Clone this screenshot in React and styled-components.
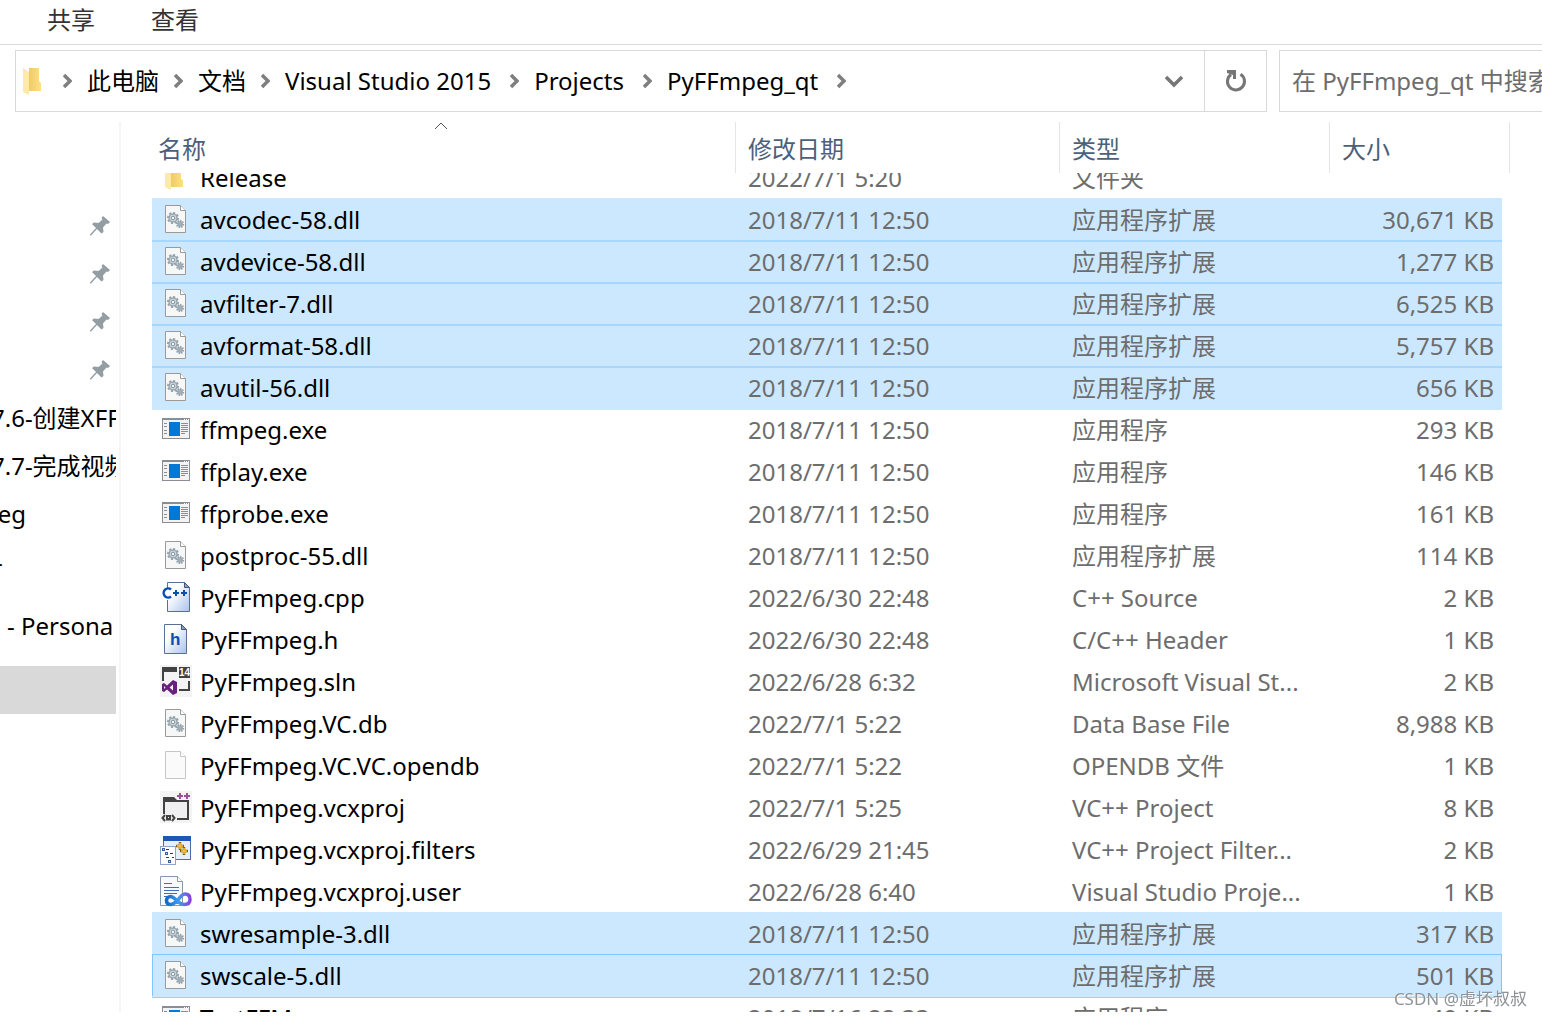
import React, { useLayoutEffect, useRef } from "react";

import styled, { createGlobalStyle, css } from "styled-components";

const DLL = "应用程序扩展";
const EXE = "应用程序";

const crumbs = [
  { label: "此电脑" },
  { label: "文档" },
  { label: "Visual Studio 2015", latin: true },
  { label: "Projects", latin: true },
  { label: "PyFFmpeg_qt", latin: true },
];

const files = [
  { icon: "folder", name: "Release", date: "2022/7/1 5:20", type: "文件夹", size: "" },
  { icon: "dll", name: "avcodec-58.dll", date: "2018/7/11 12:50", type: DLL, size: "30,671 KB", selected: true },
  { icon: "dll", name: "avdevice-58.dll", date: "2018/7/11 12:50", type: DLL, size: "1,277 KB", selected: true },
  { icon: "dll", name: "avfilter-7.dll", date: "2018/7/11 12:50", type: DLL, size: "6,525 KB", selected: true },
  { icon: "dll", name: "avformat-58.dll", date: "2018/7/11 12:50", type: DLL, size: "5,757 KB", selected: true },
  { icon: "dll", name: "avutil-56.dll", date: "2018/7/11 12:50", type: DLL, size: "656 KB", selected: true },
  { icon: "exe", name: "ffmpeg.exe", date: "2018/7/11 12:50", type: EXE, size: "293 KB" },
  { icon: "exe", name: "ffplay.exe", date: "2018/7/11 12:50", type: EXE, size: "146 KB" },
  { icon: "exe", name: "ffprobe.exe", date: "2018/7/11 12:50", type: EXE, size: "161 KB" },
  { icon: "dll", name: "postproc-55.dll", date: "2018/7/11 12:50", type: DLL, size: "114 KB" },
  { icon: "cpp", name: "PyFFmpeg.cpp", date: "2022/6/30 22:48", type: "C++ Source", size: "2 KB" },
  { icon: "header", name: "PyFFmpeg.h", date: "2022/6/30 22:48", type: "C/C++ Header", size: "1 KB" },
  { icon: "sln", name: "PyFFmpeg.sln", date: "2022/6/28 6:32", type: "Microsoft Visual St...", size: "2 KB" },
  { icon: "dll", name: "PyFFmpeg.VC.db", date: "2022/7/1 5:22", type: "Data Base File", size: "8,988 KB" },
  { icon: "blank", name: "PyFFmpeg.VC.VC.opendb", date: "2022/7/1 5:22", type: "OPENDB 文件", size: "1 KB" },
  { icon: "vcxproj", name: "PyFFmpeg.vcxproj", date: "2022/7/1 5:25", type: "VC++ Project", size: "8 KB" },
  { icon: "filters", name: "PyFFmpeg.vcxproj.filters", date: "2022/6/29 21:45", type: "VC++ Project Filter...", size: "2 KB" },
  { icon: "user", name: "PyFFmpeg.vcxproj.user", date: "2022/6/28 6:40", type: "Visual Studio Proje...", size: "1 KB" },
  { icon: "dll", name: "swresample-3.dll", date: "2018/7/11 12:50", type: DLL, size: "317 KB", selected: true },
  { icon: "dll", name: "swscale-5.dll", date: "2018/7/11 12:50", type: DLL, size: "501 KB", selected: true, focused: true },
  { icon: "exe", name: "TestFFMpeg.exe", date: "2018/7/16 22:33", type: EXE, size: "49 KB" },
];

const pinned = [1, 2, 3, 4];

const folders = [
  { label: "7.6-创建XFFmpeg", indent: 8 },
  { label: "7.7-完成视频", indent: 8 },
  { label: "peg", indent: 0 },
  { label: "-", indent: 12 },
];

const Gear = ({ x, y, r }) => (
  <g transform={`translate(${x} ${y})`}>
    <circle
      r={r}
      fill="#cdd7de"
      stroke="#93a1ab"
      strokeWidth="2"
      pathLength="160"
      strokeDasharray="11 9"
    />
    <circle r={r - 1} fill="#cdd7de" stroke="#93a1ab" />
    <circle r={r * 0.36} fill="#f4f6f7" stroke="#82919c" />
  </g>
);

const icons = {
  folder: (
    <>
      <path d="M11 4H21V18L23 19V26H11Z" fill="url(#folderBody)" />
      <path d="M5 3L11 7V29L5 26Z" fill="#ffe9a6" />
    </>
  ),
  dll: (
    <>
      <path d="M5.5 2.5H20.5L25.5 7.5V29.5H5.5Z" fill="#f6f7f7" stroke="#9a9a9a" />
      <path d="M20.5 2.5V7.5H25.5" fill="#fff" stroke="#9a9a9a" />
      <Gear x={13} y={15} r={5} />
      <Gear x={20} y={21} r={3.2} />
    </>
  ),
  blank: (
    <>
      <path d="M5.5 2.5H20.5L25.5 7.5V29.5H5.5Z" fill="#fafafa" stroke="#c6c6c6" />
      <path d="M20.5 2.5V7.5H25.5" fill="#fff" stroke="#c6c6c6" />
    </>
  ),
  exe: (
    <>
      <rect x="2.5" y="5.5" width="27" height="20" fill="#f3f3f3" stroke="#8a8d91" />
      <rect x="2" y="5" width="28" height="2" fill="#8a8d91" />
      <path d="M24 6.500H25M26 6.500H27M28 6.500H29" stroke="#fff" />
      <rect x="9" y="9" width="11" height="14" fill="#0078d7" />
      <path d="M4 10.5H7M4 13.5H7M4 17.5H7M4 20.5H7" stroke="#8a8d91" />
      <path d="M21 10.5H28M21 12.5H28M21 14.5H28M21 16.5H28M21 18.5H28M21 20.5H25" stroke="#8a8d91" />
    </>
  ),
  cpp: (
    <>
      <path d="M7.5 1.5H24.5L29.5 6.5V30.5H7.5Z" fill="url(#page)" stroke="#5b6f92" />
      <path d="M24.5 1.5V6.5H29.5Z" fill="#8d9db8" stroke="#445778" />
      <rect x="3" y="7" width="9" height="12" fill="#fff" />
      <path d="M11 8.5A4.500 4.500 0 1 0 11 15.5" fill="none" stroke="#0b4fae" strokeWidth="2.500" />
      <path d="M13 12H19M16 9V15M21 12H27M24 9V15" stroke="#0b4fae" strokeWidth="2" />
    </>
  ),
  header: (
    <>
      <path d="M4.5 1.5H21.5L26.5 6.5V30.5H4.5Z" fill="url(#page)" stroke="#5b6f92" />
      <path d="M21.5 1.5V6.5H26.5Z" fill="#8d9db8" stroke="#445778" />
      <text x="10" y="22" fontSize="17" fontWeight="700" fill="#0b4fae">h</text>
    </>
  ),
  sln: (
    <>
      <rect width="32" height="32" fill="#f3f3f3" />
      <path d="M2 2H17V7H4V16H2Z" fill="#424242" />
      <path d="M28 16H30V26H19V24H28Z" fill="#424242" />
      <rect x="19" y="2" width="11" height="11" fill="#424242" />
      <text x="19" y="11" fontSize="10" fontWeight="700" fill="#fff">14</text>
      <path
        d="M13 15L17 17V28L13 30L7 24.5L4 27L2 26V19L4 18L7 20.5ZM13 19.5L9.5 22.5L13 25.5ZM4 21V24L5.500 22.500Z"
        fill="#68217a"
        fillRule="evenodd"
      />
    </>
  ),
  vcxproj: (
    <>
      <rect width="32" height="32" fill="#f3f3f3" />
      <path d="M3 6H14L17 9H29V29H17V27H27V11H5V23H3Z" fill="#424242" />
      <rect x="5" y="11" width="22" height="16" fill="#efeff2" />
      <path d="M17 5H23M20 2V8M24 5H30M27 2V8" stroke="#9b4f96" strokeWidth="2" />
      <path d="M5 24L2.5 27L5 30M12 24L14.5 27L12 30" fill="none" stroke="#424242" strokeWidth="2" />
      <path d="M6 24H11V29.5H6ZM8 26V27H9V26Z" fill="#424242" fillRule="evenodd" />
    </>
  ),
  filters: (
    <>
      <rect x="3.5" y="3.5" width="27" height="23" fill="#e6effb" stroke="#4a6fa5" />
      <rect x="3" y="3" width="28" height="5" fill="#1f57b8" />
      <rect x="0.5" y="13.5" width="15" height="18" fill="#fff" stroke="#8ea4c8" />
      <path d="M6 16.5H9M10 20.5H13M6 24.5H9M12 24.5H14" stroke="#333c4d" />
      <path d="M2 15H5V18H2ZM5 19H8V22H5ZM8 27H11V30H8Z" fill="#3f5f9c" />
      <path d="M6 20H7V21H6ZM9 28H10V29H9ZM3 16H4V17H3Z" fill="#ffd84a" />
      <path d="M16 13H24M20 9V17M20 18H28M24 14V22" stroke="#8a5e00" strokeWidth="2.5" />
      <path d="M17 13H23M20 10V16M21 18H27M24 15V21" stroke="#ffc83d" strokeWidth="1.5" />
    </>
  ),
  user: (
    <>
      <path d="M0.5 1.5H17.5L22.5 6.5V30.5H0.5Z" fill="#f7f9fc" stroke="#8698ad" />
      <path d="M17.5 1.5V6.5H22.5" fill="#fff" stroke="#8698ad" />
      <path d="M4 8.5H12M4 12.5H19M4 15.500H19M4 18.500H17M4 21.500H8" stroke="#3b6fc0" />
      <path
        d="M18 25C15 28 13 29.500 10.500 29.500C8 29.500 6.500 28 6.500 25.500C6.500 23 8.500 21.500 10.500 21.500C15 21.500 18 29.500 24 29.500C28 29.500 30 27.500 30 24.500C30 21 28 19 25 19C22 19 20 22 18 25"
        fill="none"
        stroke="url(#loop)"
        strokeWidth="3.500"
      />
    </>
  ),
};

const FileIcon = ({ kind }) => (
  <IconSvg viewBox="0 0 32 32" aria-hidden="true">
    {icons[kind]}
  </IconSvg>
);

// gradients shared by the file icons
const IconDefs = () => (
  <DefsSvg aria-hidden="true">
    <defs>
      <linearGradient id="folderBody">
        <stop offset="0" stopColor="#efcb66" />
        <stop offset="1" stopColor="#ffe085" />
      </linearGradient>
      <linearGradient id="page" x1="0" y1="0" x2="1" y2="1">
        <stop offset="0.3" stopColor="#fff" />
        <stop offset="1" stopColor="#a9c2ea" />
      </linearGradient>
      <linearGradient id="loop">
        <stop offset="0" stopColor="#1668c9" />
        <stop offset="0.5" stopColor="#3a9df0" />
        <stop offset="1" stopColor="#8a45d6" />
      </linearGradient>
    </defs>
  </DefsSvg>
);

const ChevronRight = () => (
  <svg width="9" height="16" viewBox="0 0 9 16" aria-hidden="true">
    <path d="M1 2L7 8L1 14" fill="none" stroke="#7f7f7f" strokeWidth="3.500" />
  </svg>
);

const Pin = () => (
  <svg width="22" height="22" viewBox="0 0 22 22" aria-hidden="true">
    <path
      d="M14 1L21 7L19 9L17.500 8.500L14 12.500L14.500 17L12.500 18.500L8 14L2 20.500H1V19.500L7 13L3 9L5 7.500L9.500 8L13.500 4.500L12.500 3Z"
      fill="#929da4"
    />
  </svg>
);

function AddressBar() {
  return (
    <BarRow>
      <Address aria-label="地址栏">
        <FolderButton type="button" aria-label="PyFFmpeg_qt">
          <svg width="20" height="28" viewBox="0 0 20 28" aria-hidden="true">
            <path d="M6 1H16V14L18 16V24H6Z" fill="url(#folderBody)" />
            <path d="M0 1L6 5V28L0 25Z" fill="#ffe9a6" />
          </svg>
        </FolderButton>
        <Crumbs>
          <ChevronRight />
          {crumbs.map(({ label, latin }) => (
            <React.Fragment key={label}>
              <Crumb href="#" $latin={latin}>
                {label}
              </Crumb>
              <ChevronRight />
            </React.Fragment>
          ))}
        </Crumbs>
        <HistoryButton type="button" aria-label="历史记录">
          <svg width="20" height="14" viewBox="0 0 20 14" aria-hidden="true">
            <path d="M2 3L10 11L18 3" fill="none" stroke="#767676" strokeWidth="3.500" />
          </svg>
        </HistoryButton>
        <RefreshButton type="button" aria-label="刷新">
          <svg width="22" height="24" viewBox="0 0 22 24" aria-hidden="true">
            <path d="M15.500 5.200A8.500 8.500 0 1 1 6 5.500" fill="none" stroke="#767676" strokeWidth="3" />
            <path d="M2 1H11V10H8V6L2 4Z" fill="#767676" />
          </svg>
        </RefreshButton>
      </Address>
      <Search type="text" aria-label="搜索" placeholder="在 PyFFmpeg_qt 中搜索" />
    </BarRow>
  );
}

function Sidebar() {
  return (
    <Side>
      {pinned.map((id) => (
        <SideItem key={id}>
          <PinButton type="button" aria-label="取消固定">
            <Pin />
          </PinButton>
        </SideItem>
      ))}
      {folders.map(({ label, indent }) => (
        <SideItem key={label}>
          <SideLabel $indent={indent}>{label}</SideLabel>
        </SideItem>
      ))}
      <SideItem $group>
        <SideLabel $indent={24}>- Persona</SideLabel>
      </SideItem>
      <SideItem $group $active />
    </Side>
  );
}

function FileList() {
  const list = useRef(null);

  // the list opens slightly scrolled, with the first row under the header
  useLayoutEffect(() => {
    list.current.scrollTop = 17;
  }, []);

  return (
    <ListArea ref={list}>
      <Table>
        <colgroup>
          <col />
          <Col $width={324} />
          <Col $width={270} />
          <Col $width={172} />
          <Col $width={8} />
        </colgroup>
        <Head>
          <tr>
            <HeadCell $first>
              <SortMark viewBox="0 0 14 8" aria-hidden="true">
                <path d="M1 7L7 1L13 7" fill="none" stroke="#555" />
              </SortMark>
              名称
            </HeadCell>
            <HeadCell>修改日期</HeadCell>
            <HeadCell>类型</HeadCell>
            <HeadCell colSpan={2}>大小</HeadCell>
          </tr>
        </Head>
        <tbody>
          {files.map((file, i) => (
            <Row
              key={file.name}
              $selected={file.selected}
              $joined={file.selected && files[i - 1].selected}
              $focused={file.focused}
            >
              <NameCell>
                <NameBox>
                  <FileIcon kind={file.icon} />
                  <Name>{file.name}</Name>
                </NameBox>
              </NameCell>
              <Cell>{file.date}</Cell>
              <Cell>{file.type}</Cell>
              <Cell $right>{file.size}</Cell>
              <td />
            </Row>
          ))}
        </tbody>
      </Table>
    </ListArea>
  );
}

function App() {
  return (
    <Window>
      <GlobalStyle />
      <IconDefs />
      <Tabs>
        <Tab type="button">共享</Tab>
        <Tab type="button">查看</Tab>
      </Tabs>
      <AddressBar />
      <Content>
        <Sidebar />
        <FileList />
      </Content>
      <Watermark>CSDN @虚坏叔叔</Watermark>
    </Window>
  );
}

const GlobalStyle = createGlobalStyle`
  * {
    box-sizing: border-box;
  }
  body {
    margin: 0;
    background: #fff;
  }
  body,
  button,
  input {
    font-family: "Noto Sans", "Noto Sans CJK SC", sans-serif;
    font-size: 24px;
    line-height: 32px;
  }
  button {
    padding: 0;
    border: 0;
    background: none;
  }
  svg {
    display: block;
    flex-shrink: 0;
  }
`;

const Window = styled.div`
  position: relative;
  display: flex;
  flex-direction: column;
  height: 100vh;
  padding-bottom: 5px;
  overflow: hidden;
`;

const DefsSvg = styled.svg`
  width: 0;
  height: 0;
`;

const Tabs = styled.div`
  display: flex;
  gap: 56px;
  padding: 4px 47px 8px;
  border-bottom: 1px solid #dadbdc;
`;

const Tab = styled.button`
  color: #333;
`;

const BarRow = styled.div`
  display: flex;
  gap: 12px;
  height: 62px;
  margin: 5px 0 10px 15px;
`;

const Address = styled.nav`
  display: flex;
  flex: 1;
  align-items: center;
  min-width: 0;
  border: 1px solid #d9d9d9;
`;

const FolderButton = styled.button`
  padding: 0 20px 0 7px;
`;

const Crumbs = styled.div`
  display: flex;
  flex: 1;
  align-items: center;
  gap: 15px;
  min-width: 0;
  overflow: hidden;
  white-space: nowrap;
`;

const Crumb = styled.a`
  padding-right: ${(props) => (props.$latin ? "4px" : "0")};
  color: #000;
  text-decoration: none;
`;

const HistoryButton = styled.button`
  padding: 0 20px;
`;

const RefreshButton = styled.button`
  display: flex;
  align-items: center;
  justify-content: center;
  align-self: stretch;
  width: 62px;
  border-left: 1px solid #d9d9d9;
`;

const Search = styled.input`
  width: 263px;
  padding: 0 0 0 12px;
  border: 1px solid #d9d9d9;
  border-right: 0;
  border-radius: 0;
  outline: 0;

  &::placeholder {
    color: #6d6d6d;
    opacity: 1;
  }
`;

const Content = styled.div`
  display: flex;
  flex: 1;
  min-height: 0;
`;

const Side = styled.aside`
  width: 121px;
  padding: 80px 3px 0 0;
  border-right: 2px solid #f5f5f5;
  overflow: hidden;
`;

const SideItem = styled.div`
  display: flex;
  align-items: center;
  height: 48px;
  margin-top: ${(props) => (props.$group ? "16px" : "0")};
  background: ${(props) => (props.$active ? "#d9d9d9" : "none")};
  overflow: hidden;
  white-space: nowrap;
`;

const SideLabel = styled.span`
  margin-left: ${(props) => props.$indent - 17}px;
`;

const PinButton = styled.button`
  margin-left: auto;
  padding-right: 5px;
`;

const ListArea = styled.main`
  flex: 1;
  min-width: 0;
  padding: 0 32px 0 31px;
  overflow-y: auto;
  scrollbar-width: none;
`;

const Table = styled.table`
  width: 100%;
  table-layout: fixed;
  border-collapse: separate;
  border-spacing: 0;
`;

const Col = styled.col`
  width: ${(props) => props.$width}px;
`;

const Head = styled.thead`
  position: sticky;
  top: 0;
  background: #fff;
`;

const HeadCell = styled.th`
  height: 51px;
  padding: 0 12px ${(props) => (props.$first ? "8px 6px" : "8px")};
  border-right: 1px solid #e5e5e5;
  color: #4c607a;
  font-weight: 400;
  line-height: 32px;
  text-align: left;
  vertical-align: bottom;
`;

const SortMark = styled.svg`
  width: 14px;
  height: 8px;
  margin: 0 auto 3px;
`;

const Row = styled.tr`
  ${(props) =>
    props.$selected &&
    css`
      td:not(:last-child) {
        background: #cce8ff;
        box-shadow: ${props.$joined ? "inset 0 2px #a6d8ff, " : ""} 0 2px #cce8ff;
      }
    `}
  ${(props) =>
    props.$focused &&
    css`
      td:not(:last-child) {
        box-shadow: inset 0 1px #7fc6ff, 0 1px #cce8ff, 0 2px #99d1ff;
      }
      td:first-child {
        box-shadow: inset 1px 1px #7fc6ff, 0 1px #cce8ff, 0 2px #99d1ff;
      }
      td:nth-child(4) {
        box-shadow: inset -1px 1px #7fc6ff, 0 1px #cce8ff, 0 2px #99d1ff;
      }
    `}
`;

const Cell = styled.td`
  height: 42px;
  padding: 2px 8px 0 12px;
  color: #6d6d6d;
  text-align: ${(props) => (props.$right ? "right" : "left")};
  white-space: nowrap;
`;

const NameCell = styled(Cell)`
  padding: 0 8px;
  color: #000;
`;

const NameBox = styled.div`
  display: flex;
  align-items: center;
  gap: 8px;
`;

const Name = styled.span`
  padding-top: 2px;
`;

const IconSvg = styled.svg`
  width: 32px;
  height: 32px;
  font-family: "Liberation Sans", sans-serif;
`;

const Watermark = styled.div`
  position: absolute;
  right: 15px;
  bottom: 6px;
  color: #8f9296;
  font-size: 17px;
  line-height: 24px;
  text-shadow: 1px 1px #fff;
`;

export default App;
